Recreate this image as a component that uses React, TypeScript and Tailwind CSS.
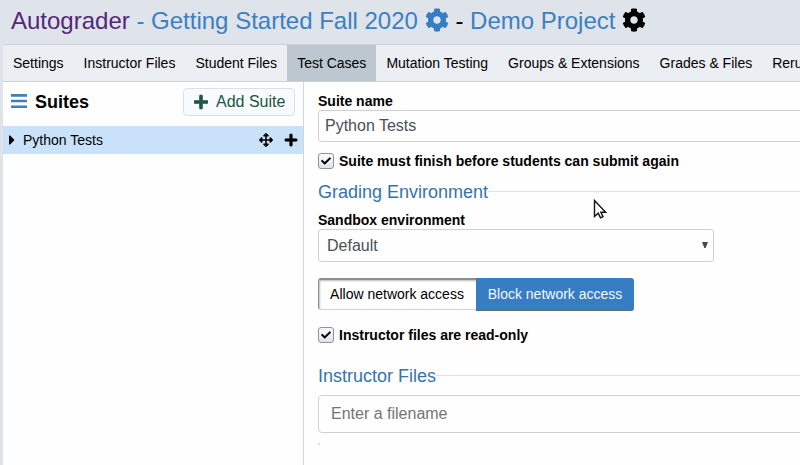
import React from 'react';
import { FaCog, FaPlus, FaArrowsAlt, FaCaretRight, FaCheck } from 'react-icons/fa';

const tabs = [
  'Settings',
  'Instructor Files',
  'Student Files',
  'Test Cases',
  'Mutation Testing',
  'Groups & Extensions',
  'Grades & Files',
  'Rerun Tests',
];

function Header() {
  return (
    <header className="flex h-[45px] shrink-0 items-center border-b border-[#cdd1d5] bg-[#dfe3ea] pb-[3px] pl-2 text-2xl whitespace-pre text-black">
      <span className="text-[#53287a]">Autograder</span>
      <span className="text-[#3b80c3]"> - Getting Started Fall 2020</span>
      <FaCog className="mb-0.5 ml-[7px] size-6 text-[#377dc3]" />
      <span className="ml-[6.5px]">- </span>
      <span className="text-[#3b80c3]">Demo Project</span>
      <FaCog className="mb-0.5 ml-[6.6px] size-6" />
    </header>
  );
}

function TabBar() {
  return (
    <nav className="flex h-[37px] shrink-0 border-b border-[#cbd0d5] bg-[#ebeef3] text-sm">
      {tabs.map((tab) => (
        <div
          key={tab}
          className={`flex shrink-0 items-center px-2.5 whitespace-nowrap ${tab === 'Test Cases' ? 'bg-[#bdc7d0]' : ''}`}
        >
          {tab}
        </div>
      ))}
    </nav>
  );
}

function Sidebar() {
  return (
    <aside className="w-[301px] shrink-0 border-r border-[#cdd6e2]">
      <div className="flex h-11 items-center pr-2 pb-1 pl-2">
        <svg className="mb-0.5 h-[14px] w-4 text-[#427fb8]" viewBox="0 0 16 14" fill="currentColor">
          <path d="M0 0H16V2.8H0ZM0 5.8H16V8.2H0ZM0 11.4H16V14H0Z" />
        </svg>
        <h2 className="ml-2 text-lg font-bold">Suites</h2>
        <button className="ml-auto flex h-7 w-28 items-center rounded-[4px] border border-[#dbe0e5] bg-[#f8fbfd] pl-2.5 text-base text-[#205540]">
          <FaPlus className="mr-[8px] h-4 w-[14px] stroke-current stroke-[20]" />
          <span>Add Suite</span>
        </button>
      </div>
      <div className="flex h-7 items-center bg-[#cae1fa] pr-[5px] pl-1.5 text-sm">
        <FaCaretRight className="h-4 w-[6px]" viewBox="0 0 192 512" />
        <span className="ml-2">Python Tests</span>
        <FaArrowsAlt className="ml-auto size-[14px]" />
        <FaPlus className="mb-px ml-[11px] h-[14px] w-[14px] stroke-current stroke-[20]" />
      </div>
    </aside>
  );
}

function Check({ label }: { label: string }) {
  return (
    <label className="flex h-4 items-center text-sm font-bold">
      <span className="mr-[5px] flex size-4 items-center justify-center rounded-[3px] border border-[#8d929e] bg-linear-to-b from-[#fafbfd] to-[#dfe2ea]">
        <FaCheck className="size-2.5" />
      </span>
      {label}
    </label>
  );
}

function Legend({ children }: { children: string }) {
  return (
    <div className="flex h-6 items-center text-lg text-[#3474ac]">
      <span>{children}</span>
      <span className="mb-0.5 h-px flex-1 bg-[#dfe1e4]" />
    </div>
  );
}

function SuiteForm() {
  return (
    <main className="min-w-0 flex-1 overflow-hidden pl-3.5">
      <div className="w-[560px]">
        <div className="mt-[9px] h-5 text-sm leading-5 font-bold">Suite name</div>
        <div className="mt-[-1px] flex h-8 items-center rounded-[3px] border border-[#ced0d3] px-1.5 text-base text-[#495057]">
          Python Tests
        </div>
        <div className="mt-[11px]">
          <Check label="Suite must finish before students can submit again" />
        </div>
        <div className="mt-[11px]">
          <Legend>Grading Environment</Legend>
        </div>
        <div className="mt-1.5 h-5 text-sm leading-5 font-bold">Sandbox environment</div>
        <div className="mt-[-1px] flex h-[33px] w-[396px] items-center justify-between rounded-[3px] border border-[#ced0d3] pr-[5px] pl-2 text-base text-[#495057]">
          Default
          <svg className="mb-px h-1.5 w-1.5" viewBox="0 0 6 6">
            <path d="M0 0H6L3.6 6H2.4Z" fill="#424750" />
          </svg>
        </div>
        <div className="mt-4 flex h-[33px] text-sm">
          <button className="mb-px w-[158px] rounded-l-[3px] border-t-2 border-b border-l border-t-[#8f8f8f] border-b-[#d3d3d3] border-l-[#8f8f8f] bg-white pr-px pb-px shadow-[inset_1px_1px_2px_#bbbbbb]">
            Allow network access
          </button>
          <button className="w-[158px] rounded-r-[3px] border-b border-[#626c78] bg-[#377dc3] text-[#f3f8fc]">
            Block network access
          </button>
        </div>
        <div className="mt-4">
          <Check label="Instructor files are read-only" />
        </div>
        <div className="mt-[21px]">
          <Legend>Instructor Files</Legend>
        </div>
        <div className="mt-[7px] flex h-[38px] items-center rounded-[4px] border border-[#ced2d8] px-3 text-base text-[#757575]">
          Enter a filename
        </div>
        <div className="mt-2.5 h-0.5 w-0.5 bg-[#dedfe2]" />
      </div>
    </main>
  );
}

export default function App() {
  return (
    <div className="relative flex h-[465px] w-[800px] flex-col overflow-hidden border-l-[3px] border-[#dfe3ea] bg-[#fefefe] font-['Liberation_Sans',Arial,sans-serif] text-black">
      <Header />
      <TabBar />
      <div className="flex flex-1">
        <Sidebar />
        <SuiteForm />
      </div>
      <svg className="absolute top-[199px] left-[590px] h-[21px] w-[14px]" viewBox="0 0 14 21">
        <path
          d="M1.5 1.5V17.5L5.2 14.2L7.5 18.8L10 17.6L7.9 13.3H12.7Z"
          fill="white"
          stroke="#111111"
          strokeWidth="1.4"
        />
      </svg>
    </div>
  );
}
